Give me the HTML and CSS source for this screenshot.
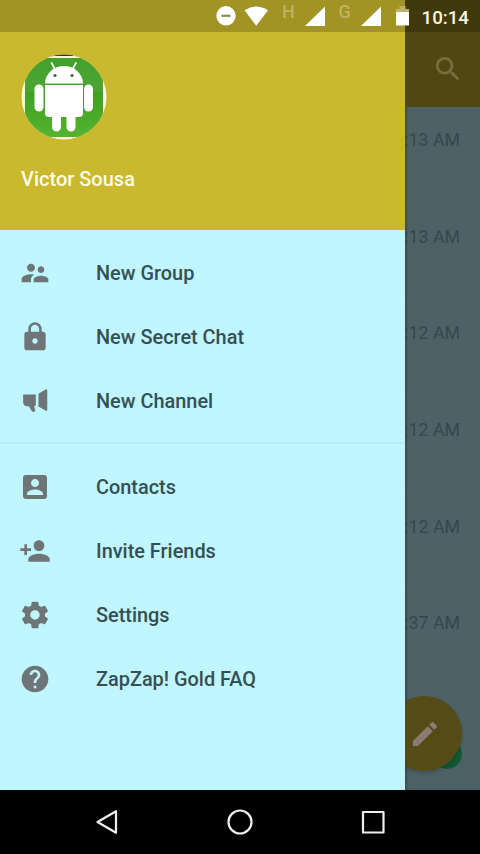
FILE: index.html
```html
<!DOCTYPE html>
<html lang="en">
<head>
<meta charset="utf-8">
<title>ZapZap! Gold</title>
<link rel="stylesheet" href="styles.css">
</head>
<body>
<div class="phone">
  <header class="status">
    <svg class="status-icons" width="212" height="32" viewBox="200 0 212 32" aria-hidden="true">
      <circle cx="226" cy="15.800" r="9.700" fill="#fff"/>
      <path d="M221.500 15.800h9" stroke="#8d8a55" stroke-width="2.200"/>
      <path d="M244.500 10.200Q256 2.800 268 10.200L256.200 25.800z" fill="#fff"/>
      <path d="M325 6.500V26H305z" fill="#fff"/>
      <path d="M381 6.500V26H361z" fill="#fff"/>
      <path d="M399.500 6h6v3h3.500v4H396V9h3.500z" fill="#bbb265"/>
      <path d="M396 12h13v13.500h-13z" fill="#fff"/>
      <text class="net" x="282" y="18">H</text>
      <text class="net" x="338.500" y="18">G</text>
    </svg>
    <span class="clock">10:14</span>
  </header>

  <main class="screen">
    <nav class="drawer">
      <div class="profile">
        <svg class="avatar" width="86" height="86" viewBox="0 0 86 86" aria-hidden="true">
          <defs>
            <clipPath id="round"><circle cx="43" cy="43" r="42.500"/></clipPath>
            <linearGradient id="green" x1="0" y1="0" x2="0" y2="1">
              <stop offset="0" stop-color="#43a02b"/><stop offset=".42" stop-color="#4da634"/>
              <stop offset=".44" stop-color="#40a022"/><stop offset="1" stop-color="#55b330"/>
            </linearGradient>
          </defs>
          <g clip-path="url(#round)">
            <path d="M0 0h86v86H0z" fill="#f5f7d8"/>
            <path d="M32 0h20v2H32z" fill="#3a3512"/>
            <rect x="4" y="4" width="78" height="79" rx="10" fill="url(#green)"/>
          </g>
          <g fill="#fff">
            <path d="M24 29.500a19 17.500 0 0 1 38 0z"/>
            <path d="M24 31h38V59a4 4 0 0 1-4 4H28a4 4 0 0 1-4-4z"/>
            <rect x="13.500" y="30.500" width="9" height="27" rx="4.500"/>
            <rect x="63" y="30.500" width="9" height="27" rx="4.500"/>
            <path d="M31 60h9v13a4.500 4.500 0 0 1-9 0zM45.500 60h9v13a4.500 4.500 0 0 1-9 0z"/>
          </g>
          <path d="M30.500 9l4.500 8M55 9l-4.500 8" stroke="#fff" stroke-width="1.600" stroke-linecap="round"/>
          <circle cx="34" cy="21.500" r="1.600" fill="#555"/><circle cx="51" cy="21.500" r="1.600" fill="#555"/>
        </svg>
        <div class="name">Victor Sousa</div>
      </div>

      <ul class="menu">
        <li class="item">
          <svg class="icon" viewBox="0 0 24 24"><path d="M16.500 12c1.380 0 2.490-1.120 2.490-2.500S17.880 7 16.500 7 14 8.120 14 9.500s1.120 2.500 2.500 2.500zM9 11c1.660 0 2.990-1.340 2.990-3S10.660 5 9 5 6 6.340 6 8s1.340 3 3 3zm7.500 3c-1.830 0-5.500.92-5.500 2.750V19h11v-2.250c0-1.830-3.670-2.750-5.500-2.750zM9 13c-2.330 0-7 1.170-7 3.500V19h7v-2.250c0-.85.33-2.340 2.370-3.470C10.500 13.100 9.660 13 9 13z"/></svg>
          <span>New Group</span>
        </li>
        <li class="item">
          <svg class="icon" viewBox="0 0 24 24"><path d="M18 8h-1V6c0-2.760-2.240-5-5-5S7 3.240 7 6v2H6c-1.100 0-2 .9-2 2v10c0 1.100.9 2 2 2h12c1.100 0 2-.9 2-2V10c0-1.100-.9-2-2-2zm-6 9c-1.100 0-2-.9-2-2s.9-2 2-2 2 .9 2 2-.9 2-2 2zm3.100-9H8.900V6c0-1.710 1.390-3.100 3.100-3.100s3.100 1.390 3.100 3.100v2z"/></svg>
          <span>New Secret Chat</span>
        </li>
        <li class="item">
          <svg class="icon" viewBox="0 0 24 24"><path d="M3.200 7.200h9.400v8.400h-1.300l.9 3.500c.2.900-2 1.300-2.500.6L7.300 15.900h-2q-2.200-1-2.200-3V7.400zM14.600 6.500L20 3.300q1.200-.3 1.200.8V18.800q0 .8-1 .5l-5.600-3.200z"/></svg>
          <span>New Channel</span>
        </li>
      </ul>
      <ul class="menu menu-second">
        <li class="item">
          <svg class="icon" viewBox="0 0 24 24"><path d="M3 5v14c0 1.100.89 2 2 2h14c1.100 0 2-.9 2-2V5c0-1.100-.9-2-2-2H5c-1.110 0-2 .9-2 2zm12 4c0 1.660-1.340 3-3 3s-3-1.340-3-3 1.340-3 3-3 3 1.340 3 3zm-9 8c0-2 4-3.100 6-3.100s6 1.100 6 3.100v1H6v-1z"/></svg>
          <span>Contacts</span>
        </li>
        <li class="item">
          <svg class="icon" viewBox="0 0 24 24"><path d="M15 12c2.210 0 4-1.790 4-4s-1.790-4-4-4-4 1.790-4 4 1.790 4 4 4zm-9-2V7H4v3H1v2h3v3h2v-3h3v-2H6zm9 4c-2.670 0-8 1.340-8 4v2h16v-2c0-2.660-5.330-4-8-4z"/></svg>
          <span>Invite Friends</span>
        </li>
        <li class="item">
          <svg class="icon" viewBox="0 0 24 24"><path d="M19.430 12.980c.04-.32.07-.64.07-.98s-.03-.66-.07-.98l2.110-1.650c.19-.15.24-.42.12-.64l-2-3.460c-.12-.22-.39-.3-.61-.22l-2.490 1c-.52-.4-1.080-.73-1.690-.98l-.38-2.650C14.460 2.180 14.250 2 14 2h-4c-.25 0-.46.18-.49.42l-.38 2.650c-.61.25-1.170.59-1.690.98l-2.490-1c-.23-.09-.49 0-.61.22l-2 3.460c-.13.22-.07.49.12.64l2.110 1.650c-.04.32-.07.65-.07.98s.03.66.07.98l-2.110 1.650c-.19.15-.24.42-.12.64l2 3.460c.12.22.39.3.61.22l2.490-1c.52.4 1.080.73 1.690.98l.38 2.650c.03.24.24.42.49.42h4c.25 0 .46-.18.49-.42l.38-2.650c.61-.25 1.170-.59 1.690-.98l2.490 1c.23.09.49 0 .61-.22l2-3.460c.12-.22.07-.49-.12-.64l-2.110-1.650zM12 15.500c-1.930 0-3.500-1.570-3.500-3.500s1.570-3.500 3.500-3.500 3.500 1.570 3.500 3.500-1.570 3.500-3.500 3.500z"/></svg>
          <span>Settings</span>
        </li>
        <li class="item">
          <svg class="icon" viewBox="0 0 24 24"><path d="M12 2C6.480 2 2 6.480 2 12s4.480 10 10 10 10-4.480 10-10S17.520 2 12 2zm1 17h-2v-2h2v2zm2.070-7.750l-.9.920C13.450 12.900 13 13.500 13 15h-2v-.5c0-1.100.45-2.100 1.170-2.830l1.240-1.260c.37-.36.59-.86.59-1.410 0-1.100-.9-2-2-2s-2 .9-2 2H8c0-2.210 1.790-4 4-4s4 1.790 4 4c0 .88-.36 1.680-.93 2.250z"/></svg>
          <span>ZapZap! Gold FAQ</span>
        </li>
      </ul>
    </nav>

    <section class="chats">
      <div class="toolbar">
        <svg width="32" height="32" viewBox="0 0 24 24" fill="#776e40"><path d="M15.500 14h-.79l-.28-.27C15.410 12.590 16 11.110 16 9.500 16 5.910 13.090 3 9.500 3S3 5.910 3 9.500 5.910 16 9.500 16c1.610 0 3.090-.59 4.230-1.570l.27.28v.79l5 4.990L20.490 19l-4.990-5zm-6 0C7.010 14 5 11.990 5 9.500S7.010 5 9.500 5 14 7.010 14 9.500 11.990 14 9.500 14z"/></svg>
      </div>
      <div class="chat">:13 AM</div>
      <div class="chat">:13 AM</div>
      <div class="chat">:12 AM</div>
      <div class="chat">:12 AM</div>
      <div class="chat">:12 AM</div>
      <div class="chat chat-last">:37 AM</div>
      <span class="badge"></span>
      <div class="fab">
        <svg width="32" height="32" viewBox="0 0 24 24" fill="#897b72"><path d="M3 17.250V21h3.750L17.810 9.940l-3.750-3.750L3 17.250zM20.710 7.040c.39-.39.39-1.020 0-1.410l-2.340-2.340c-.39-.39-1.020-.39-1.410 0l-1.830 1.830 3.750 3.750 1.830-1.830z"/></svg>
      </div>
    </section>
  </main>

  <footer class="navbar">
    <svg width="32" height="32" viewBox="0 0 32 32"><path d="M25 5.200v21.600L6.500 16z"/></svg>
    <svg width="32" height="32" viewBox="0 0 32 32"><circle cx="16" cy="16" r="11.500"/></svg>
    <svg width="32" height="32" viewBox="0 0 32 32"><rect x="6" y="6" width="20.500" height="20.500"/></svg>
  </footer>
</div>
</body>
</html>
```
FILE: styles.css
```css
* { box-sizing: border-box; }

body {
  margin: 0;
  font-family: Roboto, "Liberation Sans", sans-serif;
}

.phone {
  position: relative;
  display: flex;
  flex-direction: column;
  width: 480px;
  height: 854px;
  overflow: hidden;
  background: #000;
}

/* translucent system bar over the app */
.status {
  position: absolute;
  inset: 0 0 auto;
  z-index: 2;
  display: flex;
  justify-content: space-between;
  align-items: center;
  height: 32px;
  padding: 0 11px 0 200px;
  background: rgba(0, 0, 0, .2);
}

.status-icons { display: block; flex: none; }
.net { font-size: 18px; font-weight: 500; fill: #c0b462; }

.clock {
  padding-top: 3px;
  font-size: 18.700px;
  font-weight: 500;
  line-height: 32px;
  color: #fff6dc;
  white-space: nowrap;
}

.screen {
  display: flex;
  height: 790px;
}

.drawer {
  flex: none;
  width: 405px;
  background: #bff6ff;
}

.profile {
  height: 230px;
  padding: 54px 21px 0;
  background: #cab82e;
}

.avatar { display: block; }

.name {
  margin-top: 27px;
  font-size: 20px;
  font-weight: 500;
  line-height: 24px;
  color: #fffde3;
}

.menu {
  margin: 0;
  padding: 11px 0 9px;
  list-style: none;
}

.menu-second {
  padding-top: 11px;
  border-top: 2px solid #b9ebf8;
}

.item {
  display: flex;
  align-items: center;
  gap: 45px;
  height: 64px;
  padding-left: 19px;
  font-size: 19.900px;
  font-weight: 500;
  color: #344f55;
}

.icon {
  width: 32px;
  height: 32px;
  fill: #6d7577;
}

.chats {
  position: relative;
  flex: 1;
  overflow: hidden;
  background: #4c6267;
  box-shadow: inset 2px 0 2px rgba(0, 0, 0, .2);
}

.toolbar {
  display: flex;
  justify-content: flex-end;
  height: 107px;
  padding: 53px 16px 0 0;
  background: #504812;
}

.chat {
  display: flex;
  justify-content: flex-end;
  height: 96.700px;
  padding: 21px 20px 0 0;
  border-bottom: 1px solid #495f64;
  font-size: 17.800px;
  line-height: 24px;
  color: #35484d;
  white-space: nowrap;
}

.chat-last { border-bottom: 0; }

.fab {
  position: absolute;
  right: 18px;
  bottom: 19px;
  display: flex;
  align-items: center;
  justify-content: center;
  width: 75px;
  height: 75px;
  border-radius: 50%;
  background: #544b16;
  box-shadow: 0 2px 4px rgba(0, 0, 0, .2);
}

.badge {
  position: absolute;
  right: 18px;
  bottom: 21px;
  width: 30px;
  height: 30px;
  border-radius: 50%;
  background: #125a34;
}

.navbar {
  display: flex;
  justify-content: space-between;
  align-items: center;
  height: 64px;
  padding: 0 91px;
}

.navbar svg {
  fill: none;
  stroke: #eee;
  stroke-width: 2.200;
  stroke-linejoin: round;
}
```
